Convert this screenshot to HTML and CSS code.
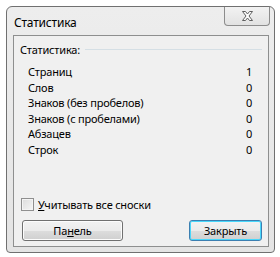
FILE: index.html
```html
<!DOCTYPE html>
<html lang="ru">
<head>
    <meta charset="utf-8" />
    <title>Статистика</title>
    <link rel="stylesheet" href="styles.css">
</head>
<body>
    <div class="window">
        <div class="titlebar">
            <span class="title">Статистика</span>
            <div class="close-btn">
                <svg width="13" height="10" viewBox="0 0 13 10">
                    <path d="M1.5 0.5 H4.5 L6.5 3 L8.5 0.5 H11.5 L8 5 L11.5 9.5 H8.5 L6.5 7 L4.5 9.5 H1.5 L5 5 Z" fill="#fdfdfd" stroke="#5f5f5f" stroke-width="1" stroke-linejoin="round" />
                </svg>
            </div>
        </div>
        <div class="client">
            <div class="group-head">
                <span>Статистика:</span>
                <div class="group-line"></div>
            </div>
            <ul class="stats">
                <li><span>Страниц</span><span class="val">1</span></li>
                <li><span>Слов</span><span class="val">0</span></li>
                <li><span>Знаков (без пробелов)</span><span class="val">0</span></li>
                <li><span>Знаков (с пробелами)</span><span class="val">0</span></li>
                <li><span>Абзацев</span><span class="val">0</span></li>
                <li><span>Строк</span><span class="val">0</span></li>
            </ul>
            <label class="check">
                <span class="box"></span>
                <span><u>У</u>читывать все сноски</span>
            </label>
            <div class="buttons">
                <button class="btn btn-panel">Па<u>н</u>ель</button>
                <button class="btn btn-default">Закрыть</button>
            </div>
        </div>
    </div>
</body>
</html>
```

FILE: styles.css
```css
body {
    margin: 0;
    background: #ffffff;
    font-family: "Noto Sans", "Open Sans", sans-serif;
    font-size: 11px;
    letter-spacing: -0.2px;
    color: #000;
}

.window {
    margin: 6px 0 0 6px;
    width: 269px;
    height: 247px;
    border: 1px solid #707070;
    border-radius: 6px 6px 4px 4px;
    background: linear-gradient(#ededed, #e4e4e4);
    box-sizing: border-box;
    display: flex;
    flex-direction: column;
    padding: 0 5px 5px 6px;
}

.titlebar {
    height: 28px;
    display: flex;
    align-items: flex-start;
    justify-content: space-between;
}

.title {
    margin: 7px 0 0 1px;
    font-size: 12px;
}

.close-btn {
    width: 44px;
    height: 18px;
    border: 1px solid #8c8c8c;
    border-top: none;
    border-radius: 0 0 4px 4px;
    background: linear-gradient(#f2f2f2, #e2e2e2);
    display: flex;
    align-items: center;
    justify-content: center;
    margin-right: -1px;
}

.client {
    flex: 1;
    border: 1px solid #8e8f8f;
    background: #f0f0f0;
    display: flex;
    flex-direction: column;
    padding: 0 6px 0 6px;
}

.group-head {
    display: flex;
    align-items: center;
    margin-top: 5px;
    height: 16px;
}

.group-head span {
    margin-right: 5px;
}

.group-line {
    flex: 1;
    border-top: 1px solid #d5dfe5;
}

.stats {
    list-style: none;
    margin: 7px 0 0 8px;
    padding: 0;
    width: 224px;
}

.stats li {
    display: flex;
    justify-content: space-between;
    height: 15.6px;
    line-height: 15.6px;
}

.check {
    display: flex;
    align-items: center;
    margin-top: 39px;
    margin-left: 1px;
}

.box {
    width: 11px;
    height: 11px;
    border: 1px solid #8f8f8f;
    background: linear-gradient(135deg, #dcdcdc, #f6f6f6);
    box-shadow: inset 0 0 0 1px #f4f4f4;
    margin-right: 4px;
}

.buttons {
    display: flex;
    justify-content: space-between;
    margin-top: 8px;
    padding-left: 2px;
}

.btn {
    height: 21px;
    border: 1px solid #707070;
    border-radius: 3px;
    background: linear-gradient(#f2f2f2 0%, #ebebeb 50%, #dddddd 51%, #cfcfcf 100%);
    font-family: inherit;
    font-size: 11px;
    letter-spacing: -0.2px;
    padding: 0;
    box-shadow: inset 0 0 0 1px #fcfcfc;
}

.btn-panel {
    width: 101px;
}

.btn-default {
    width: 73px;
    border-color: #3c7fb1;
    box-shadow: inset 0 0 0 1px #48d7fb;
}
```
